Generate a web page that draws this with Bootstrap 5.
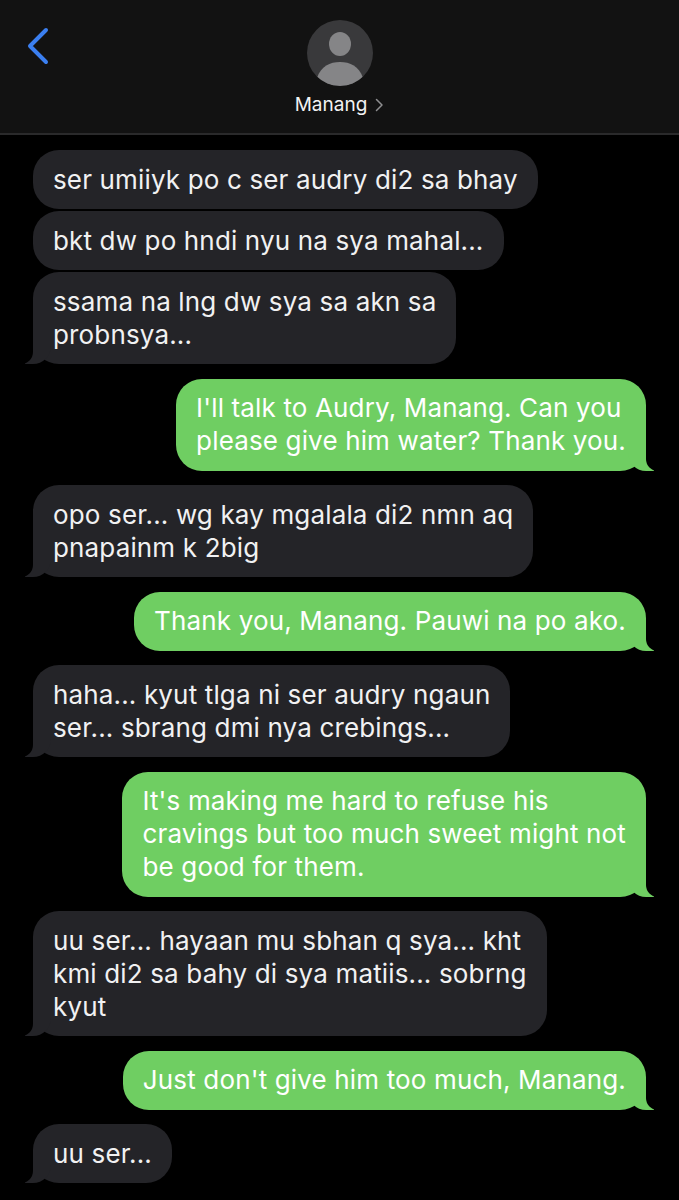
<!DOCTYPE html>
<html lang="en">
<head>
  <meta charset="UTF-8">
  <meta name="viewport" content="width=device-width, initial-scale=1.0">
  <title>Messages - Manang</title>
  <link href="https://cdn.jsdelivr.net/npm/bootstrap@5.3.0/dist/css/bootstrap.min.css" rel="stylesheet">
  <style>
    body {
      background: #000;
      font-family: Inter, "Liberation Sans", sans-serif;
    }
    .chat-head {
      height: 135px;
      background: #121212;
      border-bottom: 2px solid #2a2a2b;
      padding-top: 20px;
    }
    .back-btn {
      left: 26px;
      top: 27px;
    }
    .avatar-pic {
      display: block;
      width: 66px;
      height: 66px;
    }
    .contact-name {
      margin-top: 7px;
      height: 24px;
      font-size: 19px;
      line-height: 24px;
      color: #f2f2f2;
    }
    .chat-body {
      padding: 15px 33px 0;
    }
    .bubble {
      position: relative;
      padding: 12.5px 20px 13.5px;
      border-radius: 26px;
      font-size: 26px;
      letter-spacing: 0.15px;
      line-height: 33px;
      white-space: nowrap;
      color: #f1f1f2;
      background: #242428;
    }
    .bubble-me {
      color: #fff;
      background: #6fce62;
    }
    .tail-in::before, .tail-in::after, .tail-me::before, .tail-me::after {
      content: "";
      position: absolute;
      bottom: 0;
      height: 26px;
    }
    .tail-in::before {
      left: -8px;
      width: 26px;
      background: #242428;
      border-bottom-right-radius: 18px;
    }
    .tail-in::after {
      left: -14px;
      width: 14px;
      background: #000;
      border-bottom-right-radius: 12px;
    }
    .tail-me::before {
      right: -8px;
      width: 26px;
      background: #6fce62;
      border-bottom-left-radius: 18px;
    }
    .tail-me::after {
      right: -14px;
      width: 14px;
      background: #000;
      border-bottom-left-radius: 12px;
    }
    .gap-same { margin-top: 2px; }
    .gap-new { margin-top: 14.5px; }
  </style>
</head>
<body>
  <div class="chat-head position-relative d-flex flex-column align-items-center">
    <svg class="back-btn position-absolute" width="24" height="38" viewBox="0 0 24 38">
      <path d="M20 3 L4 19 L20 35" fill="none" stroke="#3b7ff0" stroke-width="4" stroke-linecap="round" stroke-linejoin="round"/>
    </svg>
    <svg class="avatar-pic" viewBox="0 0 66 66">
      <defs><clipPath id="avatarClip"><circle cx="33" cy="33" r="33"/></clipPath></defs>
      <circle cx="33" cy="33" r="33" fill="#39393b"/>
      <g clip-path="url(#avatarClip)" fill="#858587">
        <ellipse cx="33" cy="24" rx="11" ry="12"/>
        <path d="M10 58 C14 46 23 42 33 42 C43 42 52 46 56 58 C50 63 42 66 33 66 C24 66 16 63 10 58 Z"/>
      </g>
    </svg>
    <div class="contact-name d-flex align-items-center gap-2">
      <span>Manang</span>
      <svg width="9" height="14" viewBox="0 0 9 14"><path d="M1.500 1.500 L7 7 L1.500 12.500" fill="none" stroke="#8e8e90" stroke-width="1.500" stroke-linecap="round" stroke-linejoin="round"/></svg>
    </div>
  </div>

  <div class="chat-body d-flex flex-column align-items-start">
    <div class="bubble">ser umiiyk po c ser audry di2 sa bhay</div>
    <div class="bubble gap-same">bkt dw po hndi nyu na sya mahal...</div>
    <div class="bubble tail-in gap-same">ssama na lng dw sya sa akn sa<br>probnsya...</div>
    <div class="bubble bubble-me tail-me gap-new align-self-end">I'll talk to Audry, Manang. Can you<br>please give him water? Thank you.</div>
    <div class="bubble tail-in gap-new">opo ser... wg kay mgalala di2 nmn aq<br>pnapainm k 2big</div>
    <div class="bubble bubble-me tail-me gap-new align-self-end">Thank you, Manang. Pauwi na po ako.</div>
    <div class="bubble tail-in gap-new">haha... kyut tlga ni ser audry ngaun<br>ser... sbrang dmi nya crebings...</div>
    <div class="bubble bubble-me tail-me gap-new align-self-end">It's making me hard to refuse his<br>cravings but too much sweet might not<br>be good for them.</div>
    <div class="bubble tail-in gap-new">uu ser... hayaan mu sbhan q sya... kht<br>kmi di2 sa bahy di sya matiis... sobrng<br>kyut</div>
    <div class="bubble bubble-me tail-me gap-new align-self-end">Just don't give him too much, Manang.</div>
    <div class="bubble tail-in gap-new">uu ser...</div>
  </div>

  <script src="https://cdn.jsdelivr.net/npm/bootstrap@5.3.0/dist/js/bootstrap.bundle.min.js"></script>
</body>
</html>
